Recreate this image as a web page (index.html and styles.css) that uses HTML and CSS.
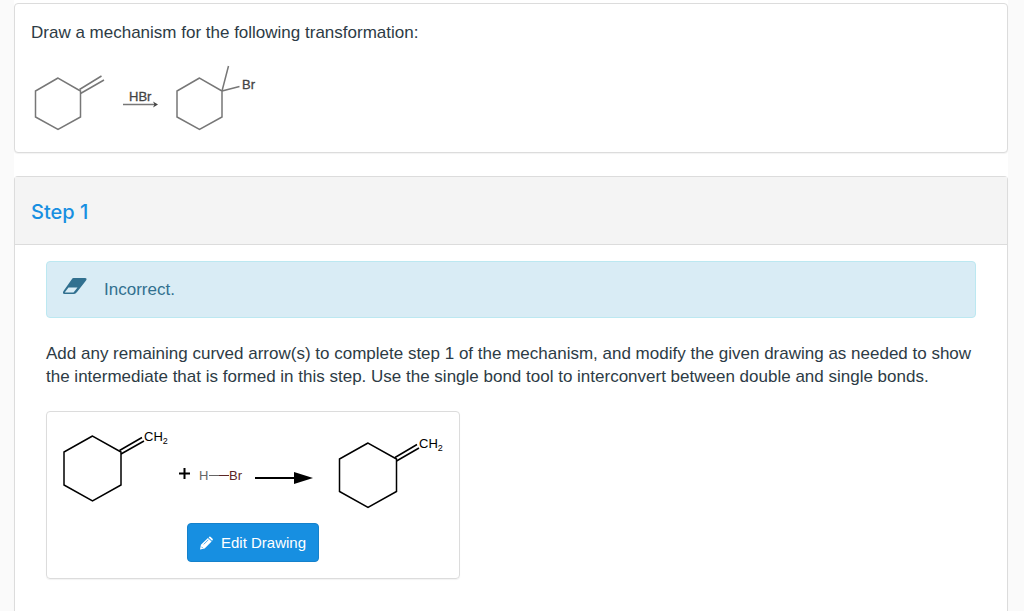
FILE: index.html
```
<!DOCTYPE html>
<html lang="en">
<head>
  <meta charset="UTF-8">
  <meta name="viewport" content="width=device-width, initial-scale=1.0">
  <title>Reaction Mechanism</title>
  <link rel="stylesheet" href="styles.css">
</head>
<body>
  <main class="page">
    <section class="card question">
      <p class="text">Draw a mechanism for the following transformation:</p>
      <svg class="scheme" width="240" height="72" viewBox="30 64 240 72" role="img" aria-label="Methylenecyclohexane reacts with HBr">
        <g class="scheme-bonds">
          <path d="M58 78L35.500 91V117L58 129.500L80.500 117V91Z"/>
          <path d="M79.500 89.500L101.500 76M80.500 93.500L104 80"/>
          <path d="M199.500 78L177 91V117L199.500 129.500L222 117V91Z"/>
          <path d="M222 91L228.500 66M222 91L239.500 86.500"/>
          <path d="M123 104.500H156"/>
        </g>
        <path class="scheme-head" d="M153 101.500L158 104.500L153 107.500L154.500 104.500Z"/>
        <text class="scheme-label" x="129" y="101">HBr</text>
        <text class="scheme-label" x="242" y="89">Br</text>
      </svg>
    </section>

    <section class="card step">
      <header class="step-header">
        <h2 class="step-title">Step 1</h2>
      </header>
      <div class="step-body">
        <div class="alert" role="status">
          <svg class="alert-icon" width="25" height="18" viewBox="1 1 25 18" aria-hidden="true">
            <path fill-rule="evenodd" d="M11.500 1H23Q25.500 1 24 3.500L15 15Q13.500 17 12 17H2.500Q0 17 1.500 14L10 2Q10.500 1 11.500 1ZM6.500 10.500L2.700 15.500H11.500L15.500 10.500Z"/>
          </svg>
          <span>Incorrect.</span>
        </div>

        <p class="text">Add any remaining curved arrow(s) to complete step 1 of the mechanism, and modify the given drawing as needed to show the intermediate that is formed in this step. Use the single bond tool to interconvert between double and single bonds.</p>

        <div class="drawing">
          <svg width="382" height="86" viewBox="62 425 382 86" role="img" aria-label="Step 1 drawing">
            <g class="bonds">
              <path d="M92.500 436L64 452V485L92.500 501L121 485V452Z"/>
              <path d="M119.500 450.500L142 437.500M121 454L144 441"/>
              <path d="M368 443L339.500 459V491.500L368 507.500L396.500 491.500V459Z"/>
              <path d="M395 457.500L417 444.500M396.500 461L419 448"/>
            </g>
            <text class="atom" x="144" y="441">CH<tspan class="sub" dy="3">2</tspan></text>
            <text class="atom" x="419" y="448">CH<tspan class="sub" dy="3">2</tspan></text>
            <path class="plus" d="M179 473.500H190M184.500 468V479"/>
            <text class="atom hydrogen" x="199" y="480">H</text>
            <path class="bond-h" d="M209 475.500H219"/>
            <path class="bond-br" d="M219 475.500H229"/>
            <text class="atom bromine" x="229" y="480">Br</text>
            <path class="arrow-line" d="M255 478H296"/>
            <path d="M294 472L313 478L294 484Z"/>
          </svg>
          <button class="edit-btn" type="button">
            <svg width="13" height="14" viewBox="0 0 14 14" aria-hidden="true">
              <path fill="#fff" d="M1 9L8.500 1.500L12.500 5.500L5 13L0 14ZM9.300 1L10 .4Q10.800 -.2 11.600 .5L13.500 2.400Q14.200 3.200 13.500 4L12.900 4.700Z"/>
              <path fill="none" stroke="#178fe1" stroke-width=".8" d="M4 8.500L9 3.500M1.500 11L3 12.500"/>
            </svg>
            Edit Drawing
          </button>
        </div>
      </div>
    </section>
  </main>
</body>
</html>
```
FILE: styles.css
```
:root {
  --text: #2d3b45;
  --border: #dcdcdc;
  --accent: #178fe1;
  --info: #31708f;
}
* {
  box-sizing: border-box;
}
body {
  margin: 0;
  background: #fafafa;
  color: var(--text);
  font-family: "Liberation Sans", Arial, sans-serif;
  font-size: 17px;
  line-height: 23px;
}
.page {
  display: flex;
  flex-direction: column;
  gap: 23px;
  min-height: 100vh;
  margin: 0 16px 0 14px;
  padding-top: 3px;
  background: #fff;
}
.card {
  background: #fff;
  border: 1px solid var(--border);
  border-radius: 4px;
  box-shadow: 0 1px 1px rgba(0,0,0,0.05);
}
.text {
  margin: 0;
}
.question {
  padding: 17px 16px 16px;
}
.scheme {
  display: block;
  margin-top: 20px;
  margin-left: -1px;
}
.scheme-bonds {
  fill: none;
  stroke: #777;
  stroke-width: 1.5;
}
.scheme-head {
  fill: #444;
}
.scheme-label {
  fill: #444;
  stroke: #444;
  stroke-width: 0.3;
  font-size: 13px;
}
.step {
  flex: 1;
  border-bottom: none;
  border-radius: 4px 4px 0 0;
}
.step-header {
  padding: 22px 16px 18px;
  background: #f4f4f4;
  border-bottom: 1px solid var(--border);
}
.step-title {
  margin: 0;
  color: var(--accent);
  font-family: Inter, "Liberation Sans", sans-serif;
  font-size: 20px;
  font-weight: 500;
  line-height: 27px;
}
.step-body {
  padding: 16px 31px 33px;
}
.alert {
  display: flex;
  align-items: center;
  gap: 16px;
  margin-bottom: 24px;
  padding: 16px;
  background: #d9ecf5;
  border: 1px solid #bce8f1;
  border-radius: 4px;
  color: var(--info);
  line-height: 23px;
}
.alert-icon {
  fill: var(--info);
  overflow: visible;
  margin-bottom: 5px;
}
.drawing {
  display: flex;
  flex-direction: column;
  align-items: center;
  gap: 12px;
  width: fit-content;
  margin-top: 23px;
  padding: 13px 15px 16px;
  border: 1px solid var(--border);
  border-radius: 4px;
  box-shadow: 0 1px 1px rgba(0,0,0,0.05);
}
.bonds {
  fill: none;
  stroke: #000;
  stroke-width: 1.5;
}
.atom {
  font-size: 13px;
}
.sub {
  font-size: 9px;
}
.plus,
.arrow-line {
  stroke: #000;
  stroke-width: 2;
}
.hydrogen {
  fill: #666;
}
.bromine {
  fill: #5c2626;
}
.bond-h {
  stroke: #666;
}
.bond-br {
  stroke: #5c2626;
}
.edit-btn {
  display: flex;
  align-items: center;
  gap: 8px;
  padding: 8px 12px;
  background: var(--accent);
  border: 1px solid #1581cb;
  border-radius: 4px;
  color: #fff;
  font-family: inherit;
  font-size: 15px;
  line-height: 21px;
  cursor: pointer;
}
```
